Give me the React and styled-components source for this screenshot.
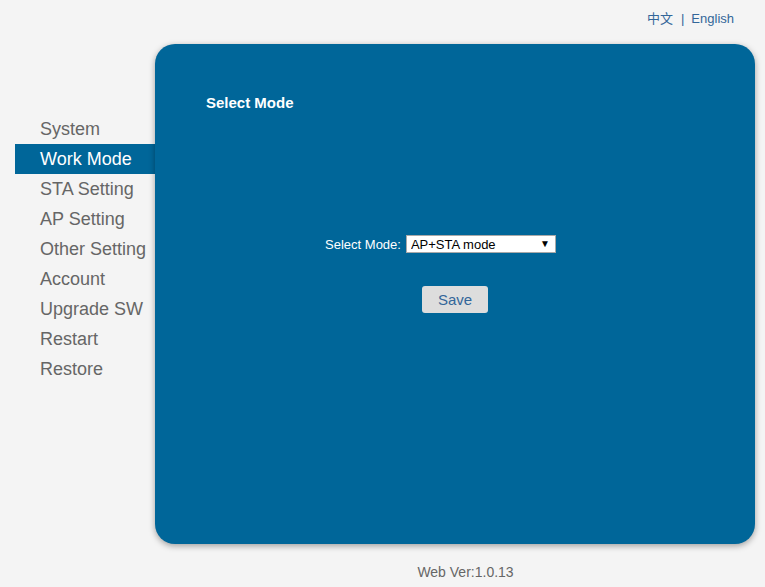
import React from "react";
import styled, { createGlobalStyle } from "styled-components";

const menu = [
  "System",
  "Work Mode",
  "STA Setting",
  "AP Setting",
  "Other Setting",
  "Account",
  "Upgrade SW",
  "Restart",
  "Restore",
];

export default function App() {
  return (
    <>
      <GlobalStyle />
      <Page>
        <Header>
          <Lang>中文</Lang>
          <Sep>|</Sep>
          <Lang>English</Lang>
        </Header>
        <Main>
          <Sidebar>
            {menu.map((m) => (
              <MenuItem key={m} active={m === "Work Mode"}>
                {m}
              </MenuItem>
            ))}
          </Sidebar>
          <Panel>
            <Title>Select Mode</Title>
            <FormRow>
              <Label>Select Mode:</Label>
              <SelectWrap>
                <Select defaultValue="apsta">
                  <option value="ap">AP mode</option>
                  <option value="sta">STA mode</option>
                  <option value="apsta">AP+STA mode</option>
                </Select>
                <Arrow>▼</Arrow>
              </SelectWrap>
            </FormRow>
            <ButtonRow>
              <SaveButton>Save</SaveButton>
            </ButtonRow>
          </Panel>
        </Main>
        <Footer>Web Ver:1.0.13</Footer>
      </Page>
    </>
  );
}

const GlobalStyle = createGlobalStyle`
  body {
    margin: 0;
    background: #f4f4f4;
    font-family: "Liberation Sans", Arial, sans-serif;
  }
`;

const Page = styled.div`
  width: 765px;
  height: 587px;
  display: flex;
  flex-direction: column;
`;

const Header = styled.div`
  height: 44px;
  display: flex;
  justify-content: flex-end;
  align-items: baseline;
  padding: 11px 31px 0 0;
  box-sizing: border-box;
  font-size: 13px;
  line-height: 15px;
  color: #336699;
`;

const Lang = styled.span`
  font-family: "Liberation Sans", "Noto Sans CJK SC", sans-serif;
  cursor: pointer;
`;

const Sep = styled.span`
  margin: 0 7px 0 8px;
`;

const Main = styled.div`
  display: flex;
`;

const Sidebar = styled.div`
  width: 155px;
  padding: 70px 0 0 15px;
  box-sizing: border-box;
  display: flex;
  flex-direction: column;
`;

const MenuItem = styled.div`
  height: 30px;
  line-height: 30px;
  padding-left: 25px;
  font-size: 18px;
  color: ${({ active }) => (active ? "#ffffff" : "#666666")};
  background: ${({ active }) => (active ? "#006699" : "transparent")};
  white-space: nowrap;
  cursor: pointer;
`;

const Panel = styled.div`
  width: 600px;
  height: 500px;
  background: #006699;
  border-radius: 20px;
  box-shadow: 0 2px 6px rgba(0, 0, 0, 0.35);
  box-sizing: border-box;
  padding: 51px 0 0 51px;
  display: flex;
  flex-direction: column;
`;

const Title = styled.div`
  font-size: 15px;
  font-weight: bold;
  color: #ffffff;
  line-height: 16px;
`;

const FormRow = styled.div`
  margin: 124px 80px 0 0;
  display: flex;
  justify-content: center;
  align-items: center;
`;

const Label = styled.span`
  font-size: 13px;
  color: #ffffff;
  margin-right: 5px;
`;

const SelectWrap = styled.div`
  position: relative;
  width: 150px;
  height: 18px;
`;

const Select = styled.select`
  appearance: none;
  display: block;
  width: 150px;
  height: 18px;
  margin: 0;
  padding: 0 0 0 4px;
  border: 1px solid #a9a9a9;
  border-radius: 0;
  background: #ffffff;
  font-family: "Liberation Sans", Arial, sans-serif;
  font-size: 13px;
  color: #000;
  box-sizing: border-box;
  outline: none;
`;

const Arrow = styled.span`
  position: absolute;
  right: 6px;
  top: 3px;
  font-size: 10px;
  color: #000;
  pointer-events: none;
`;

const ButtonRow = styled.div`
  margin: 33px 51px 0 0;
  display: flex;
  justify-content: center;
`;

const SaveButton = styled.button`
  width: 66px;
  height: 27px;
  border: none;
  border-radius: 3px;
  background: #dddddd;
  color: #336699;
  font-family: "Liberation Sans", Arial, sans-serif;
  font-size: 15px;
  cursor: pointer;
`;

const Footer = styled.div`
  margin-top: 20px;
  padding-left: 166px;
  text-align: center;
  font-size: 14px;
  color: #666666;
`;
